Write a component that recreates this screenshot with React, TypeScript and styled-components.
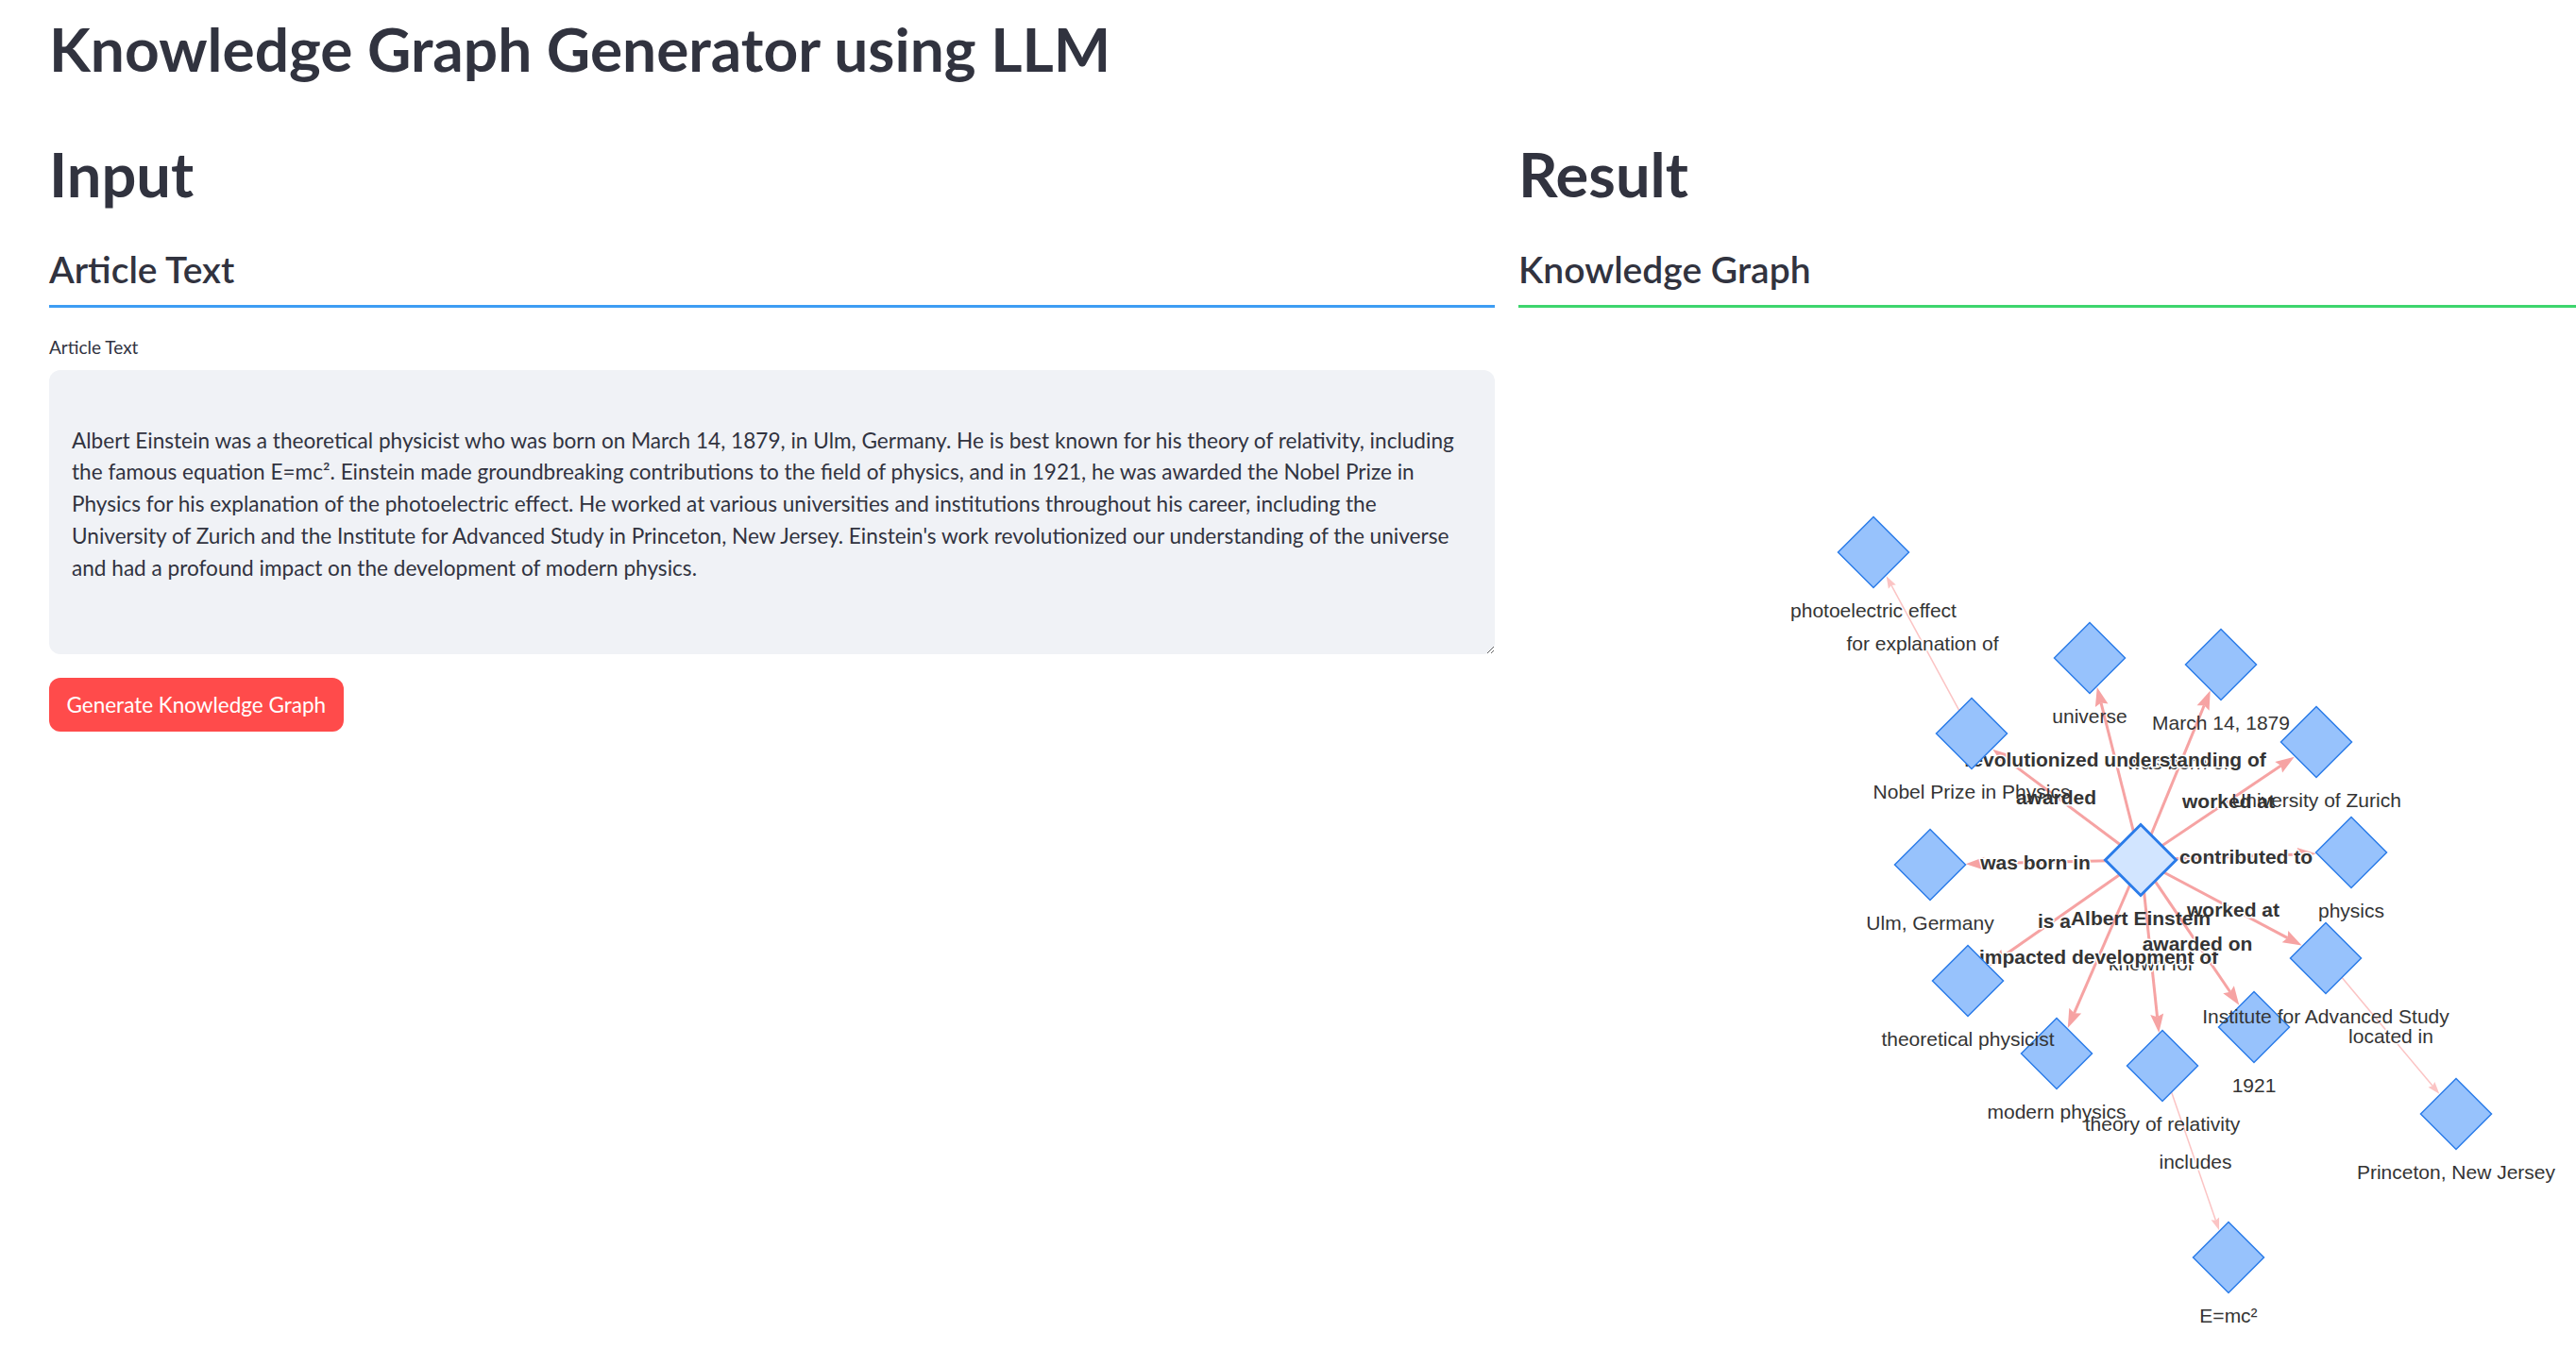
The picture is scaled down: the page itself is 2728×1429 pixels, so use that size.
import React from 'react';
import styled, { createGlobalStyle } from 'styled-components';

const GlobalStyle = createGlobalStyle`
  html, body {
    margin: 0;
    padding: 0;
    background: #ffffff;
    overflow: hidden;
  }
  body {
    font-family: Lato, "Noto Sans", sans-serif;
    color: #31333f;
  }
`;

const Page = styled.div`
  padding: 12px 0 0 52px;
  box-sizing: border-box;
  width: 100%;
`;

const Title = styled.h1`
  margin: 0;
  font-size: 64px;
  line-height: 80px;
  font-weight: 700;
  color: #31333f;
`;

const Columns = styled.div`
  display: grid;
  grid-template-columns: 1531px 1fr;
  column-gap: 25px;
  margin-top: 54px;
`;

const Column = styled.section`
  display: flex;
  flex-direction: column;
  min-width: 0;
`;

const SectionHeading = styled.h2`
  margin: 0;
  font-size: 65px;
  line-height: 76px;
  font-weight: 700;
`;

const SubHeading = styled.h3`
  margin: 39px 0 0;
  font-size: 39px;
  line-height: 48px;
  font-weight: 600;
`;

const Divider = styled.hr<{ $color: string }>`
  margin: 14px 0 0;
  border: none;
  height: 3px;
  background: ${(p) => p.$color};
`;

const FieldLabel = styled.label`
  margin-top: 30px;
  font-size: 19px;
  line-height: 24px;
  color: #31333f;
`;

const TextArea = styled.textarea`
  margin-top: 12px;
  height: 301px;
  box-sizing: border-box;
  padding: 24px 28px 24px 24px;
  border: none;
  border-radius: 12px;
  background: #f0f2f6;
  color: #31333f;
  font-family: Lato, "Noto Sans", sans-serif;
  font-size: 22.6px;
  line-height: 33.7px;
  resize: vertical;
  outline: none;
`;

const PrimaryButton = styled.button`
  align-self: flex-start;
  margin-top: 25px;
  height: 57px;
  padding: 0 18.5px;
  border: none;
  border-radius: 12px;
  background: #ff4b4b;
  color: #ffffff;
  font-family: Lato, "Noto Sans", sans-serif;
  font-size: 22.5px;
  cursor: pointer;
`;

const GraphCanvas = styled.svg`
  display: block;
`;

const NodeLabel = styled.text<{ $bold?: boolean }>`
  font-family: "Liberation Sans", Arial, sans-serif;
  font-size: 21px;
  font-weight: ${(p) => (p.$bold ? 700 : 400)};
  fill: #343434;
`;

const EdgeLabel = styled.text<{ $bold?: boolean }>`
  font-family: "Liberation Sans", Arial, sans-serif;
  font-size: 21px;
  font-weight: ${(p) => (p.$bold ? 700 : 400)};
  fill: #343434;
  stroke: #ffffff;
  stroke-width: 3px;
  paint-order: stroke;
  stroke-linejoin: round;
`;

type GNode = { id: string; label: string; x: number; y: number; selected?: boolean };
type GEdge = { from: string; to: string; label: string; bold?: boolean; thin?: boolean };

// positions in page pixels, the canvas viewBox starts where the graph column does
const nodes: GNode[] = [
  { id: 'einstein', label: 'Albert Einstein', x: 2267, y: 911, selected: true },
  { id: 'photo', label: 'photoelectric effect', x: 1984, y: 585 },
  { id: 'nobel', label: 'Nobel Prize in Physics', x: 2088, y: 777 },
  { id: 'universe', label: 'universe', x: 2213, y: 697 },
  { id: 'march', label: 'March 14, 1879', x: 2352, y: 704 },
  { id: 'zurich', label: 'University of Zurich', x: 2453, y: 786 },
  { id: 'physics', label: 'physics', x: 2490, y: 903 },
  { id: 'ulm', label: 'Ulm, Germany', x: 2044, y: 916 },
  { id: 'theo', label: 'theoretical physicist', x: 2084, y: 1039 },
  { id: 'modern', label: 'modern physics', x: 2178, y: 1116 },
  { id: 'relativity', label: 'theory of relativity', x: 2290, y: 1129 },
  { id: 'y1921', label: '1921', x: 2387, y: 1088 },
  { id: 'ias', label: 'Institute for Advanced Study', x: 2463, y: 1015 },
  { id: 'princeton', label: 'Princeton, New Jersey', x: 2601, y: 1180 },
  { id: 'emc', label: 'E=mc²', x: 2360, y: 1332 },
];

const edges: GEdge[] = [
  { from: 'nobel', to: 'photo', label: 'for explanation of', thin: true },
  { from: 'ias', to: 'princeton', label: 'located in', thin: true },
  { from: 'relativity', to: 'emc', label: 'includes', thin: true },
  { from: 'einstein', to: 'march', label: 'was born on' },
  { from: 'einstein', to: 'relativity', label: 'known for' },
  { from: 'einstein', to: 'nobel', label: 'awarded', bold: true },
  { from: 'einstein', to: 'universe', label: 'revolutionized understanding of', bold: true },
  { from: 'einstein', to: 'zurich', label: 'worked at', bold: true },
  { from: 'einstein', to: 'physics', label: 'contributed to', bold: true },
  { from: 'einstein', to: 'ulm', label: 'was born in', bold: true },
  { from: 'einstein', to: 'theo', label: 'is a', bold: true },
  { from: 'einstein', to: 'modern', label: 'impacted development of', bold: true },
  { from: 'einstein', to: 'y1921', label: 'awarded on', bold: true },
  { from: 'einstein', to: 'ias', label: 'worked at', bold: true },
];

const R = 37.5;
const byId = Object.fromEntries(nodes.map((n) => [n.id, n]));

const diamond = (n: GNode) =>
  `${n.x},${n.y - R} ${n.x + R},${n.y} ${n.x},${n.y + R} ${n.x - R},${n.y}`;

const edgeShape = (e: GEdge) => {
  const a = byId[e.from];
  const b = byId[e.to];
  const dx = b.x - a.x;
  const dy = b.y - a.y;
  const d = Math.hypot(dx, dy);
  const ux = dx / d;
  const uy = dy / d;
  const t = R / (Math.abs(ux) + Math.abs(uy)) + 1;
  const len = e.thin ? 13 : 20;
  const hw = e.thin ? 4.5 : 7;
  const tip = { x: b.x - ux * t, y: b.y - uy * t };
  const back = { x: tip.x - ux * len, y: tip.y - uy * len };
  const notch = { x: tip.x - ux * len * 0.85, y: tip.y - uy * len * 0.85 };
  const arrow = `${tip.x},${tip.y} ${back.x - uy * hw},${back.y + ux * hw} ${notch.x},${notch.y} ${back.x + uy * hw},${back.y - ux * hw}`;
  return { a, notch, arrow, mid: { x: (a.x + b.x) / 2, y: (a.y + b.y) / 2 } };
};

const ARTICLE =
  "\nAlbert Einstein was a theoretical physicist who was born on March 14, 1879, in Ulm, Germany. He is best known for his theory of relativity, including the famous equation E=mc². Einstein made groundbreaking contributions to the field of physics, and in 1921, he was awarded the Nobel Prize in Physics for his explanation of the photoelectric effect. He worked at various universities and institutions throughout his career, including the University of Zurich and the Institute for Advanced Study in Princeton, New Jersey. Einstein's work revolutionized our understanding of the universe and had a profound impact on the development of modern physics.";

const KnowledgeGraph = () => (
  <GraphCanvas width={1120} height={1103} viewBox="1608 326 1120 1103">
    {edges.map((e, i) => {
      const s = edgeShape(e);
      const color = e.thin ? '#fbc4c4' : '#f6a3a3';
      return (
        <g key={`l${i}`}>
          <line x1={s.a.x} y1={s.a.y} x2={s.notch.x} y2={s.notch.y} stroke={color} strokeWidth={e.thin ? 1.5 : 3} />
          <polygon points={s.arrow} fill={color} />
        </g>
      );
    })}
    {edges.map((e, i) => {
      const s = edgeShape(e);
      return (
        <EdgeLabel key={`t${i}`} $bold={e.bold} x={s.mid.x} y={s.mid.y} textAnchor="middle" dominantBaseline="central">
          {e.label}
        </EdgeLabel>
      );
    })}
    {nodes.map((n) => (
      <polygon
        key={`n${n.id}`}
        points={diamond(n)}
        fill={n.selected ? '#d2e5ff' : '#97c2fc'}
        stroke="#2b7ce9"
        strokeWidth={n.selected ? 3 : 1.5}
      />
    ))}
    {nodes.map((n) => (
      <NodeLabel key={`nl${n.id}`} $bold={n.selected} x={n.x} y={n.y + 69} textAnchor="middle">
        {n.label}
      </NodeLabel>
    ))}
  </GraphCanvas>
);

export default function App() {
  return (
    <>
      <GlobalStyle />
      <Page>
        <Title>Knowledge Graph Generator using LLM</Title>
        <Columns>
          <Column>
            <SectionHeading>Input</SectionHeading>
            <SubHeading>Article Text</SubHeading>
            <Divider $color="#3d9df3" />
            <FieldLabel htmlFor="article">Article Text</FieldLabel>
            <TextArea id="article" defaultValue={ARTICLE} />
            <PrimaryButton>Generate Knowledge Graph</PrimaryButton>
          </Column>
          <Column>
            <SectionHeading>Result</SectionHeading>
            <SubHeading>Knowledge Graph</SubHeading>
            <Divider $color="#3dd56d" />
            <KnowledgeGraph />
          </Column>
        </Columns>
      </Page>
    </>
  );
}
